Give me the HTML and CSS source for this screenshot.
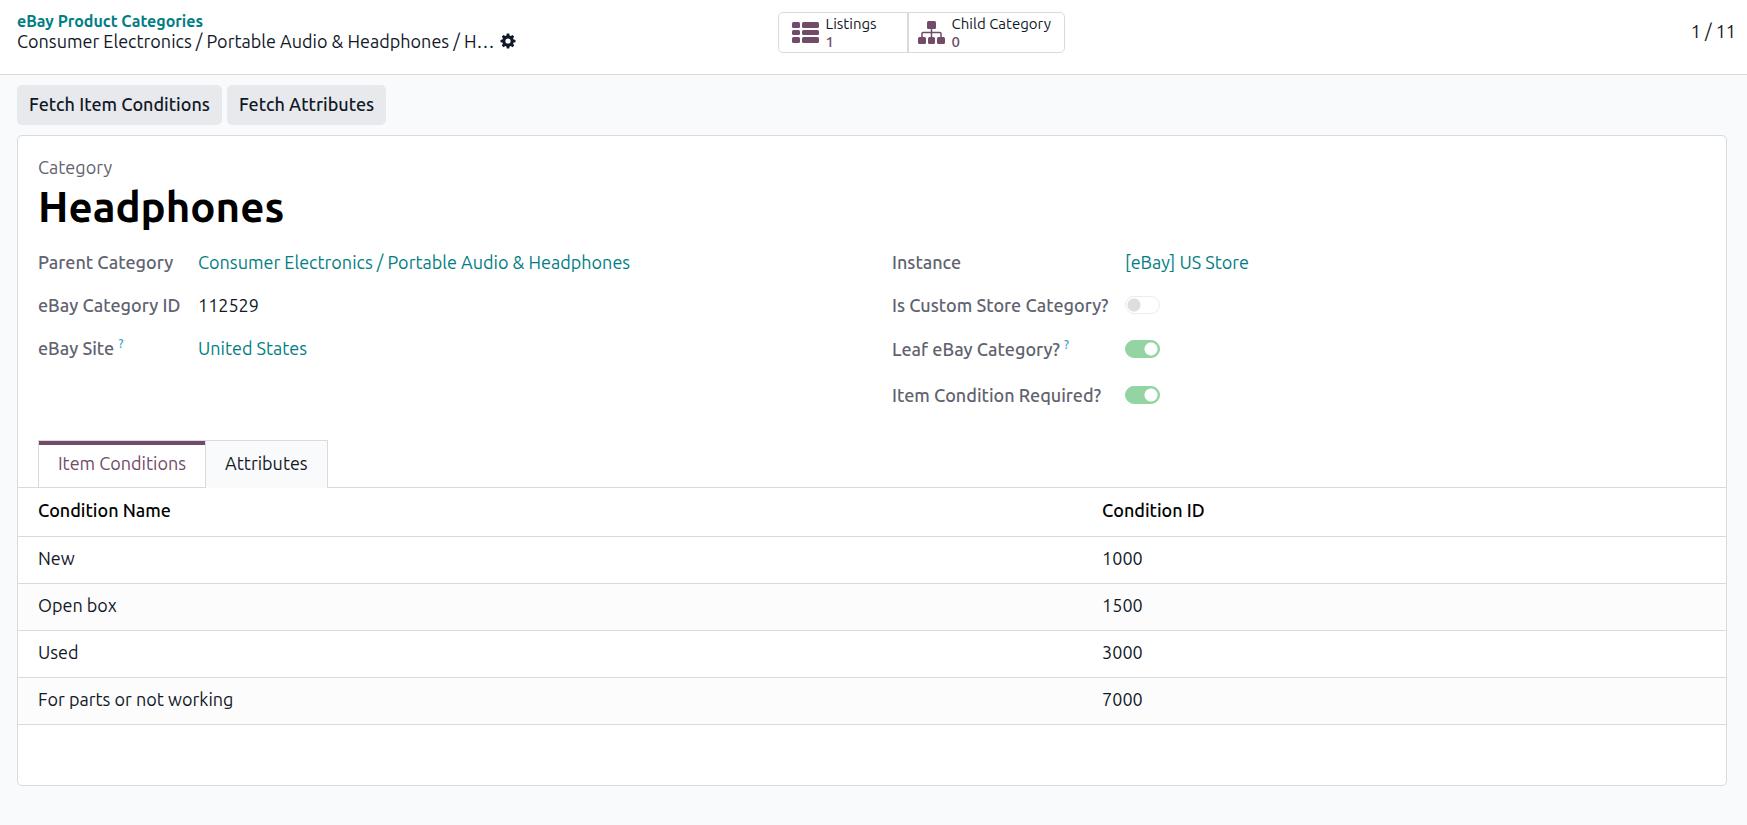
FILE: index.html
```html
<!DOCTYPE html>
<html lang="en">
<head>
  <meta charset="UTF-8">
  <meta name="viewport" content="width=device-width, initial-scale=1.0">
  <title>Headphones - eBay Product Categories</title>
  <link rel="stylesheet" href="styles.css">
</head>
<body>
  <!-- Control panel -->
  <header class="control-panel">
    <div class="breadcrumbs">
      <a class="breadcrumb-link" href="#">eBay Product Categories</a>
      <div class="breadcrumb-current">
        <span>Consumer Electronics / Portable Audio &amp; Headphones / H…</span>
        <button type="button" class="gear-button" aria-label="Actions">
          <svg width="16" height="16" viewBox="0 0 16 16">
            <path fill="currentColor" fill-rule="evenodd" d="M6.8 .5h2.4l.4 2 1.2.5 1.7-1.1 1.7 1.7-1.1 1.7.5 1.2 1.9.4v2.3l-1.9.4-.5 1.2 1.1 1.7-1.7 1.7-1.7-1.1-1.2.5-.4 1.9H6.8l-.4-1.9-1.2-.5-1.7 1.1-1.7-1.7 1.1-1.7-.5-1.2-1.9-.4V6.9l1.9-.4.5-1.2-1.1-1.7 1.7-1.7L5.200 3l1.2-.5zM8 5.400a2.600 2.600 0 1 0 0 5.200 2.600 2.600 0 0 0 0-5.200z"/>
          </svg>
        </button>
      </div>
    </div>
    <div class="stat-buttons">
      <button type="button" class="stat-button stat-listings">
        <svg width="28" height="22" viewBox="0 0 28 22" fill="currentColor">
          <rect x="0" y="0" width="8" height="6" rx="1.500"/>
          <rect x="10" y="0" width="17" height="6" rx="1.500"/>
          <rect x="0" y="8" width="8" height="5" rx="1.500"/>
          <rect x="10" y="8" width="17" height="5" rx="1.500"/>
          <rect x="0" y="15" width="8" height="6" rx="1.500"/>
          <rect x="10" y="15" width="17" height="6" rx="1.500"/>
        </svg>
        <span class="stat-info">
          <span class="stat-text">Listings</span>
          <span class="stat-value">1</span>
        </span>
      </button>
      <button type="button" class="stat-button">
        <svg width="28" height="24" viewBox="0 0 28 24" fill="currentColor">
          <rect x="9" y="0" width="9" height="8" rx="1.500"/>
          <rect x="0" y="16" width="8" height="7" rx="1.500"/>
          <rect x="10" y="16" width="7" height="7" rx="1.500"/>
          <rect x="19" y="16" width="8" height="7" rx="1.500"/>
          <path d="M4 17v-4.500q0-1 1-1h17q1 0 1 1V17M13.500 7v10" fill="none" stroke="currentColor" stroke-width="1.500"/>
        </svg>
        <span class="stat-info">
          <span class="stat-text">Child Category</span>
          <span class="stat-value">0</span>
        </span>
      </button>
    </div>
    <div class="pager">1 / 11</div>
  </header>

  <main class="content">
    <div class="statusbar">
      <button type="button" class="btn">Fetch Item Conditions</button>
      <button type="button" class="btn">Fetch Attributes</button>
    </div>

    <!-- Form sheet -->
    <div class="sheet">
      <div class="title">
        <div class="title-label">Category</div>
        <h1>Headphones</h1>
      </div>

      <div class="groups">
        <div class="group">
          <div class="field">
            <span class="label">Parent Category</span>
            <a href="#">Consumer Electronics / Portable Audio &amp; Headphones</a>
          </div>
          <div class="field">
            <span class="label">eBay Category ID</span>
            <span>112529</span>
          </div>
          <div class="field">
            <span class="label">eBay Site <sup>?</sup></span>
            <a href="#">United States</a>
          </div>
        </div>
        <div class="group group-right">
          <div class="field">
            <span class="label">Instance</span>
            <a href="#">[eBay] US Store</a>
          </div>
          <div class="field">
            <label class="label" for="custom_store">Is Custom Store Category?</label>
            <input type="checkbox" class="switch" id="custom_store" disabled>
          </div>
          <div class="field field-tall">
            <label class="label" for="leaf_category">Leaf eBay Category? <sup>?</sup></label>
            <input type="checkbox" class="switch" id="leaf_category" checked disabled>
          </div>
          <div class="field field-tall">
            <label class="label" for="condition_required">Item Condition Required?</label>
            <input type="checkbox" class="switch" id="condition_required" checked disabled>
          </div>
        </div>
      </div>

      <!-- Notebook -->
      <div class="tabs" role="tablist">
        <button type="button" class="tab active" role="tab" aria-selected="true">Item Conditions</button>
        <button type="button" class="tab" role="tab" aria-selected="false">Attributes</button>
      </div>
      <table class="list">
        <thead>
          <tr><th class="col-name">Condition Name</th><th>Condition ID</th></tr>
        </thead>
        <tbody>
          <tr><td>New</td><td>1000</td></tr>
          <tr><td>Open box</td><td>1500</td></tr>
          <tr><td>Used</td><td>3000</td></tr>
          <tr><td>For parts or not working</td><td>7000</td></tr>
        </tbody>
      </table>
    </div>
  </main>
</body>
</html>
```
FILE: styles.css
```css
* {
  margin: 0;
  padding: 0;
  box-sizing: border-box;
}
body {
  font-family: Ubuntu, "Noto Sans", sans-serif;
  font-size: 18px;
  line-height: 24px;
  color: #111827;
  background-color: #f9fafb;
}
button {
  font: inherit;
  color: inherit;
  border: none;
  background: none;
  cursor: pointer;
}
a {
  color: #017e84;
  text-decoration: none;
}

/* Control panel */
.control-panel {
  display: grid;
  grid-template-columns: 17fr auto 15fr;
  align-items: start;
  padding: 11px 11px 21px 17px;
  background-color: #fff;
  border-bottom: 1px solid #d8dadd;
}
.breadcrumbs {
  line-height: 20px;
  white-space: nowrap;
}
.breadcrumb-link {
  display: block;
  font-size: 16px;
  font-weight: 600;
}
.breadcrumb-current {
  display: flex;
  align-items: center;
  gap: 6px;
}
.gear-button {
  display: flex;
}
.stat-buttons {
  display: flex;
  margin-top: 1px;
  border: 1px solid #d8dadd;
  border-radius: 5px;
}
.stat-button {
  display: flex;
  align-items: center;
  gap: 6px;
  padding: 2px 13px 1px 9px;
  color: #714b67;
}
.stat-listings {
  padding: 2px 30px 1px 13px;
  border-right: 2px solid #d8dadd;
}
.stat-info {
  display: flex;
  flex-direction: column;
  font-size: 15px;
  line-height: 18px;
  text-align: left;
}
.stat-text {
  color: #111827;
}
.stat-value {
  font-weight: 500;
}
.pager {
  margin-top: 8px;
  text-align: right;
}

/* Form */
.content {
  padding: 10px 20px 38px 17px;
}
.statusbar {
  display: flex;
  gap: 5px;
  margin-bottom: 10px;
}
.btn {
  height: 40px;
  padding: 0 12px 3px;
  font-weight: 500;
  background-color: #e7e9ed;
  border-radius: 5px;
}
.sheet {
  padding: 19px 0 60px;
  background-color: #fff;
  border: 1px solid #d8dadd;
  border-radius: 5px;
}
.title {
  padding: 0 20px;
}
.title-label {
  color: #5f636f;
}
.title h1 {
  font-size: 42px;
  font-weight: 600;
  line-height: 56px;
  color: #000;
}
.groups {
  display: grid;
  grid-template-columns: 1fr 1fr;
  gap: 40px;
  padding: 5px 20px 22px;
}
.field {
  display: grid;
  grid-template-columns: 160px 1fr;
  align-items: center;
  min-height: 43px;
}
.group-right .field {
  grid-template-columns: 233px 1fr;
}
.group-right .field-tall {
  min-height: 46px;
}
.label {
  font-weight: 500;
  color: #5f636f;
}
.label sup {
  font-size: 12px;
  line-height: 12px;
  color: #3aa5c4;
}
.switch {
  appearance: none;
  width: 35px;
  height: 18px;
  border: 1px solid #ececec;
  border-radius: 9px;
  background: radial-gradient(circle at 8px 8px, #dedede 6px, transparent 7px) #fff;
}
.switch:checked {
  border-color: #94d4a2;
  background: radial-gradient(circle at 25px 8px, #fff 6px, transparent 7px) #94d4a2;
}

/* Tabs */
.tabs {
  display: flex;
  padding: 0 20px;
  border-bottom: 1px solid #d8dadd;
}
.tab {
  height: 48px;
  margin-bottom: -1px;
  padding: 0 19px 3px;
  border: 1px solid #d8dadd;
  border-left: none;
  border-bottom: none;
  background-color: #f9fafb;
}
.tab.active {
  padding-bottom: 2px;
  color: #714b67;
  background-color: #fff;
  border-left: 1px solid #d8dadd;
  border-bottom: 1px solid #d8dadd;
  box-shadow: inset 0 4px #714b67;
}

/* List */
.list {
  width: 100%;
  border-collapse: collapse;
}
.list th,
.list td {
  height: 47px;
  padding: 0 20px 4px;
  text-align: left;
  border-bottom: 1px solid #d8dadd;
}
.list th {
  height: 48px;
  font-weight: 500;
  color: #000;
}
.list .col-name {
  width: 62.3%;
}
.list tbody tr:nth-child(even) {
  background-color: #fcfcfc;
}
```
